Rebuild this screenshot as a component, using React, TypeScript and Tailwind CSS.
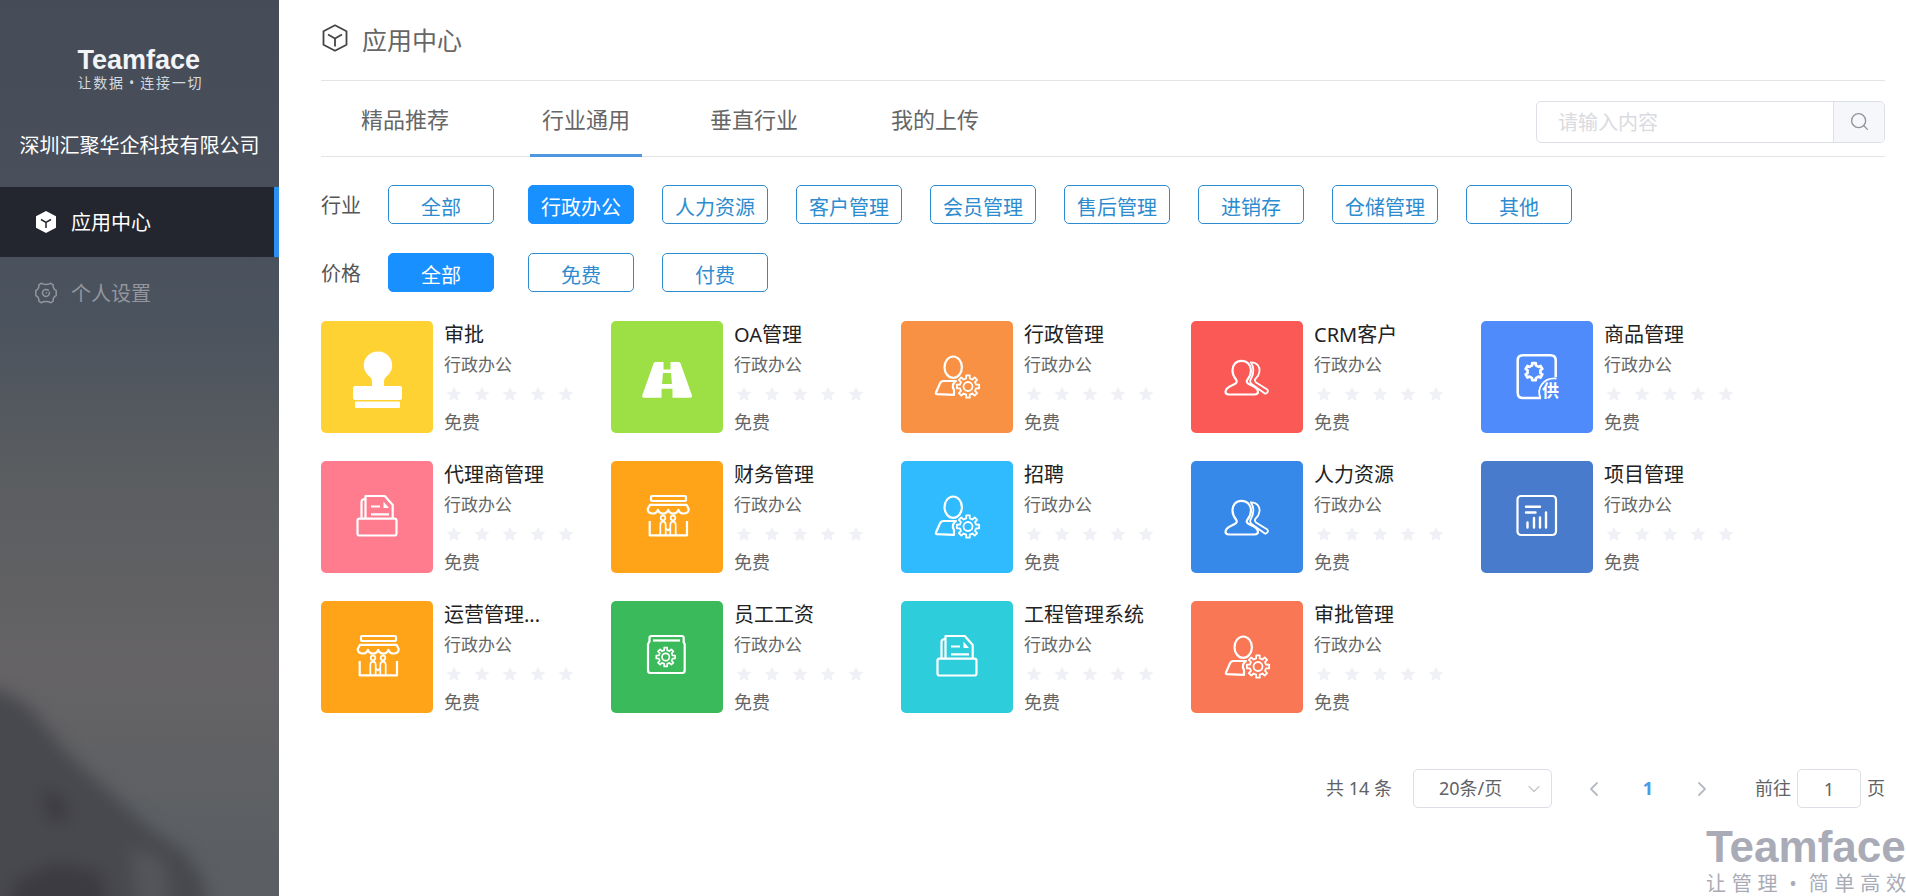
import { useState } from 'react'
import type { ReactNode } from 'react'
import { ChevronDown, ChevronLeft, ChevronRight, Search } from 'lucide-react'
import clsx from 'clsx'

type IconName = 'stamp' | 'road' | 'userGear' | 'users' | 'goods' | 'tray' | 'shop' | 'report' | 'salary'

interface AppItem {
  name: string
  icon: IconName
  color: string
}

const TABS = ['精品推荐', '行业通用', '垂直行业', '我的上传']
const INDUSTRIES = ['全部', '行政办公', '人力资源', '客户管理', '会员管理', '售后管理', '进销存', '仓储管理', '其他']
const PRICES = ['全部', '免费', '付费']

const APPS: AppItem[] = [
  { name: '审批', icon: 'stamp', color: 'bg-[#ffd233]' },
  { name: 'OA管理', icon: 'road', color: 'bg-[#9de045]' },
  { name: '行政管理', icon: 'userGear', color: 'bg-[#f99144]' },
  { name: 'CRM客户', icon: 'users', color: 'bg-[#fa5955]' },
  { name: '商品管理', icon: 'goods', color: 'bg-[#4f8bfa]' },
  { name: '代理商管理', icon: 'tray', color: 'bg-[#ff7c8e]' },
  { name: '财务管理', icon: 'shop', color: 'bg-[#ffa419]' },
  { name: '招聘', icon: 'userGear', color: 'bg-[#30bbff]' },
  { name: '人力资源', icon: 'users', color: 'bg-[#3689e9]' },
  { name: '项目管理', icon: 'report', color: 'bg-[#487bcb]' },
  { name: '运营管理...', icon: 'shop', color: 'bg-[#ffa419]' },
  { name: '员工工资', icon: 'salary', color: 'bg-[#3bba5c]' },
  { name: '工程管理系统', icon: 'tray', color: 'bg-[#2dcddc]' },
  { name: '审批管理', icon: 'userGear', color: 'bg-[#f97754]' },
]

// outline of a cog with flat teeth
function cog(cx: number, cy: number, outer: number, inner: number, teeth: number) {
  const step = (Math.PI * 2) / teeth
  const points: string[] = []
  for (let i = 0; i < teeth; i++) {
    const a = i * step - Math.PI / 2
    const corners = [[-0.28, inner], [-0.2, outer], [0.2, outer], [0.28, inner]]
    corners.forEach(([t, r]) => {
      points.push(`${(cx + r * Math.cos(a + t * step)).toFixed(2)} ${(cy + r * Math.sin(a + t * step)).toFixed(2)}`)
    })
  }
  return `M${points.join('L')}Z`
}

const ICONS: Record<IconName, ReactNode> = {
  stamp: (
    <g fill="currentColor" stroke="none">
      <path d="M57 30.500c8 0 14.200 6 14.200 13.800 0 5.200-3 9-6 11.500-1.700 1.500-2.200 3-2.200 5.200v4.500H51V61c0-2.200-.5-3.700-2.200-5.200-3-2.500-6-6.300-6-11.500 0-7.800 6.200-13.800 14.200-13.800z" />
      <rect x="32" y="65" width="49" height="14" rx="2" />
      <rect x="34" y="80.500" width="45" height="6.500" rx="1" />
    </g>
  ),
  road: (
    <path
      fill="currentColor"
      stroke="none"
      d="M45 41h7.500v7.500h7V41H67c1.500 0 2.300.6 2.800 2l11 31c.6 1.700 0 2.700-1.600 2.700H61.500v-9h-11v9H33c-1.600 0-2.200-1-1.600-2.700l11-31c.4-1.400 1.200-2 2.600-2zM52 52l-1 11h10l-1-11z"
    />
  ),
  userGear: (
    <>
      <ellipse cx="52.200" cy="46.200" rx="8.700" ry="10.700" />
      <path d="M55 60H42.500c-1.800 0-2.800.6-3.500 2.300L35 71.500c-.4 1 0 1.500 1 1.600l17 .8 0-5c-2-3-1-6.500 2-8.900z" />
      <g strokeWidth="1.800">
        <path d={cog(67, 65.5, 11.3, 8.3, 8)} />
        <circle cx="67" cy="65.500" r="4.500" />
      </g>
    </>
  ),
  users: (
    <>
      <path d="M50.500 39.800c-5.500 0-9 4.200-9 9.700 0 4 1.500 6.500 3.500 9 1.300 1.700.8 3.700-1.200 4.600-4.300 2-9.300 3.700-9.300 7.700 0 2 1.200 2.700 3.500 2.700h25.500c2.300 0 3.500-.8 3.500-2.700 0-4-5-5.700-9.300-7.700-2-.9-2.500-2.900-1.200-4.600 2-2.500 3.500-5 3.500-9 0-5.500-4-9.700-9.500-9.700z" />
      <path strokeWidth="1.800" d="M59.800 41.300c6.500 0 9.200 4.500 8.700 9-.4 3.500-2 5.500-3.800 7.200-1.200 1.200-1 2.700.3 3.900l11.300 7.200c1.700 1.600-.8 5-2.800 3.600L61 63.300c-2-1.300-2.300-3.500-1-5.500 3-5.500 4-10.300-.2-16.500z" />
    </>
  ),
  goods: (
    <>
      <path strokeWidth="2.500" d="M60 77H42c-3.200 0-5.300-2-5.300-5.300V39.500c0-3.200 2-5.200 5.300-5.200h27.500c3.200 0 5.200 2 5.200 5.200V56" />
      <path strokeWidth="1.800" d="M59.500 77c-4-9 2-20.500 16-19.500" />
      <path strokeWidth="2.600" d={cog(53, 50.7, 8.8, 6.6, 6)} />
      <text x="61" y="76" fontSize="17" fontWeight="700" fill="currentColor" stroke="none">
        供
      </text>
    </>
  ),
  tray: (
    <>
      <rect x="36.500" y="57.700" width="39" height="16.800" rx="2" />
      <path d="M44.500 57.500V35h19.300l7.900 9v13.500" />
      <path d="M40.500 57.500V41c0-2 1-3 4-3" />
      <path d="M50 45.500h9M50 53.300h18" />
      <path fill="currentColor" stroke="none" d="M62.500 40.500l5.500 6.500h-5.500z" />
    </>
  ),
  shop: (
    <>
      <rect x="40" y="35" width="35" height="5" rx="1" />
      <path d="M39 43.800h36.500l2.200 4.200c0 5.500-8.500 6.200-10.300.8-1.800 5-8.500 5-10.200 0-1.800 5-8.500 5-10.300 0-1.800 5.400-10.200 4.700-10.200-.8z" />
      <path d="M38.700 60v14.300H76V60" />
      <g strokeWidth="1.700">
        <circle cx="52" cy="57" r="2.300" />
        <circle cx="62" cy="57" r="2.300" />
        <path d="M49.300 74V64c0-2.500 1-3.300 2.700-3.300s2.700.8 2.700 3.300v3l2.300 2.500 2.300-2.500v-3c0-2.500 1-3.300 2.700-3.300s2.700.8 2.700 3.300v10M54.700 67v7M59.300 67v7" />
      </g>
    </>
  ),
  report: (
    <>
      <rect x="36.500" y="35" width="38.500" height="39" rx="3.500" />
      <path strokeLinecap="round" strokeWidth="2.400" d="M45 45.700h14M45 51.500h9.500M46.500 66.500v-5M53 66.500v-9.500M59 66.500v-10M65 66.500v-15" />
    </>
  ),
  salary: (
    <>
      <path d="M38.500 41v-4c0-1.200.8-2 2-2h30.200c1.200 0 2 .8 2 2v4" />
      <path d="M42 39.500h27" />
      <path d="M38.500 40.500l-1.500 2.500v26.500c0 1.700 1 2.500 2.500 2.500h31.700c1.500 0 2.500-.8 2.500-2.500V43l-1.500-2.500" />
      <g strokeWidth="1.700">
        <path d={cog(54.7, 56, 9.5, 7, 8)} />
        <circle cx="54.700" cy="56" r="3.700" />
      </g>
    </>
  ),
}

function TaglineText({ text, className }: { text: string; className: string }) {
  return (
    <p className={clsx('flex justify-between', className)}>
      {[...text].map((char, i) => (
        <span key={i} className="w-[1em] text-center">
          {char}
        </span>
      ))}
    </p>
  )
}

function CubeIcon({ className }: { className: string }) {
  return (
    <svg viewBox="0 0 26 28" fill="none" stroke="currentColor" strokeWidth="1.800" strokeLinejoin="round" className={className}>
      <path d="M13 1.300l11.500 6v13.400L13 26.700 1.500 20.700V7.300z" />
      <path d="M6 10.500l7 4 7-4M13 14.500v8" />
    </svg>
  )
}

function Sidebar() {
  return (
    <aside className="relative w-[279px] shrink-0 overflow-hidden bg-[linear-gradient(#454b57,#4b535e_36%,#5a5d60_52%,#656365_75%,#5b5f63_95%)] text-white">
      <svg viewBox="0 0 279 240" className="absolute bottom-0 left-0 w-full overflow-visible blur-[8px]" aria-hidden="true">
        <path fill="#48494e" d="M-40 28L5 36 30 52 70 100 110 136 150 172 185 196 205 226 212 290H-40z" />
        <path fill="#3c3b41" d="M15 225l40-18 45 8 15 65H0zM42 130l25 15 0 22-20-4z" />
        <path fill="#54555a" d="M130 190l35 14 10 80h-35z" />
      </svg>
      <div className="relative flex flex-col">
        <div className="mx-auto mt-[46px] w-[124px]">
          <div className="font-['Liberation_Sans'] text-[27px] leading-[29px] font-bold text-[#f3f4f7]">Teamface</div>
          <TaglineText text="让数据•连接一切" className="text-[14px] leading-4 text-[#d5d8dd]" />
        </div>
        <div className="mt-10 text-center text-[20px] leading-[30px] whitespace-nowrap">深圳汇聚华企科技有限公司</div>
        <nav className="mt-[26px]">
          <a href="#apps" className="flex h-[70px] items-center border-r-[5px] border-[#2a8ff0] bg-[#23262e] pl-9">
            <svg viewBox="0 0 20 22" className="h-[22px] w-5">
              <path fill="white" d="M10 0l10 5.200v11.600L10 22 0 16.800V5.200z" />
              <path fill="none" stroke="#23262e" strokeWidth="1.500" d="M5 8.500l5 2.800 5-2.800M10 11.300V17" />
            </svg>
            <span className="mt-[2px] ml-[15px] text-[20px]">应用中心</span>
          </a>
          <a href="#settings" className="flex h-[72px] items-center pl-[35px] text-[#93969c]">
            <svg viewBox="0 0 22 22" fill="none" stroke="currentColor" strokeWidth="1.500" strokeLinejoin="round" className="size-[22px]">
              <path d="M6.500 1.200c1.500 1.600 7.500 1.600 9 0l2.700 1.600c-.5 2.400 1 5 3 5.700v5c-2 .7-3.500 3.300-3 5.700l-2.700 1.600c-1.500-1.600-7.500-1.600-9 0l-2.700-1.600c.5-2.400-1-5-3-5.700v-5c2-.7 3.500-3.300 3-5.700z" />
              <path d="M13.200 8.200a3.500 3.500 0 1 0 1.200 2M11.300 10.800h.2" strokeLinecap="round" />
            </svg>
            <span className="mt-[2px] ml-[14px] text-[20px]">个人设置</span>
          </a>
        </nav>
      </div>
    </aside>
  )
}

interface FilterRowProps {
  label: string
  options: string[]
  value: string
  onChange: (value: string) => void
}

function FilterRow({ label, options, value, onChange }: FilterRowProps) {
  return (
    <div className="flex items-center">
      <span className="w-[67px] shrink-0 pt-[3px] text-[20px] text-[#555]">{label}</span>
      <div className="flex gap-7">
        {options.map((option) => (
          <button
            key={option}
            type="button"
            onClick={() => onChange(option)}
            className={clsx(
              'h-[39px] w-[106px] rounded-[5px] border pt-[6px] text-[20px] leading-none whitespace-nowrap first:mr-[6px]',
              option === value ? 'border-[#1890ff] bg-[#1890ff] text-white' : 'border-[#2d8ccf] bg-white text-[#2d8ccf]'
            )}
          >
            {option}
          </button>
        ))}
      </div>
    </div>
  )
}

function AppCard({ app }: { app: AppItem }) {
  return (
    <li className="flex gap-[11px]">
      <div className={clsx('size-[112px] shrink-0 rounded-[5px] text-white', app.color)}>
        <svg viewBox="0 0 112 112" fill="none" stroke="currentColor" strokeWidth="2.200" strokeLinejoin="round" className="size-full">
          {ICONS[app.icon]}
        </svg>
      </div>
      <div className="flex flex-col gap-[3px] whitespace-nowrap text-[#666]">
        <h3 className="text-[20px] leading-7 text-[#222]">{app.name}</h3>
        <p className="text-[17px] leading-[26px]">行政办公</p>
        <div className="flex h-[25px] items-center gap-3 pl-[2px]">
          {[1, 2, 3, 4, 5].map((star) => (
            <svg key={star} viewBox="0 0 16 16" className="size-4 fill-[#eff1f6]">
              <path d="M8 .8l2.200 4.800 5.200.6-3.900 3.500 1.100 5.200L8 12.300l-4.600 2.600 1.100-5.200L.6 6.200l5.200-.6z" />
            </svg>
          ))}
        </div>
        <p className="text-[18px] leading-[26px]">免费</p>
      </div>
    </li>
  )
}

function Pagination() {
  return (
    <div className="mt-[54px] flex h-[39px] items-center justify-end text-[18px] text-[#606266]">
      <span>共 14 条</span>
      <div className="relative ml-[21px]">
        <select aria-label="每页条数" className="h-[39px] w-[139px] appearance-none rounded-[5px] border border-[#dcdfe6] bg-white pl-[25px]">
          <option>20条/页</option>
        </select>
        <ChevronDown size={20} strokeWidth={1.3} className="pointer-events-none absolute top-[10px] right-[8px] text-[#c0c4cc]" />
      </div>
      <div className="ml-[29px] flex items-center gap-[28px]">
        <button type="button" aria-label="上一页" className="flex w-[26px] justify-center text-[#b6bac2]">
          <ChevronLeft size={24} strokeWidth={1.8} />
        </button>
        <button type="button" className="w-[26px] font-bold text-[#4a9be6]">
          1
        </button>
        <button type="button" aria-label="下一页" className="flex w-[26px] justify-center text-[#b6bac2]">
          <ChevronRight size={24} strokeWidth={1.8} />
        </button>
      </div>
      <label className="ml-10 flex items-center gap-[6px]">
        前往
        <input defaultValue="1" className="h-[39px] w-16 rounded-[5px] border border-[#dcdfe6] text-center" />
        页
      </label>
    </div>
  )
}

export default function App() {
  const [tab, setTab] = useState('行业通用')
  const [industry, setIndustry] = useState('行政办公')
  const [price, setPrice] = useState('全部')

  return (
    <div className="flex min-h-screen bg-white font-['Noto_Sans','Noto_Sans_CJK_SC',sans-serif]">
      <Sidebar />
      <main className="flex min-w-0 flex-1 flex-col">
        <div className="pr-[21px] pl-[42px]">
          <header className="flex h-[81px] items-center border-b border-[#e4e4e4] text-[#666]">
            <CubeIcon className="mb-1 h-7 w-[28px] text-[#444]" />
            <h1 className="ml-[13px] pt-[2px] text-[25px]">应用中心</h1>
          </header>

          <div className="flex h-[76px] items-center justify-between border-b border-[#e4e4e4]">
            <div role="tablist" className="flex h-[76px] pl-7">
              {TABS.map((name) => (
                <button
                  key={name}
                  type="button"
                  role="tab"
                  aria-selected={tab === name}
                  onClick={() => setTab(name)}
                  className={clsx(
                    'w-28 border-b-[3px] pt-1 text-[22px] text-[#666] odd:mr-[69px] even:mr-14',
                    tab === name ? 'border-[#4f97e0]' : 'border-transparent'
                  )}
                >
                  {name}
                </button>
              ))}
            </div>
            <div className="mt-[6px] flex h-[42px] w-[349px] overflow-hidden rounded-[5px] border border-[#dcdfe6]">
              <input
                type="text"
                aria-label="搜索应用"
                placeholder="请输入内容"
                className="min-w-0 flex-1 pt-[2px] pl-[21px] text-[20px] placeholder:text-[#d9dbe0] focus:outline-none"
              />
              <button type="button" aria-label="搜索" className="flex w-[51px] items-center justify-center border-l border-[#dcdfe6] bg-[#f5f7fa] text-[#909399]">
                <Search size={21} strokeWidth={1.5} />
              </button>
            </div>
          </div>

          <div className="mt-7 space-y-[29px]">
            <FilterRow label="行业" options={INDUSTRIES} value={industry} onChange={setIndustry} />
            <FilterRow label="价格" options={PRICES} value={price} onChange={setPrice} />
          </div>

          <ul className="mt-[29px] grid grid-cols-[repeat(auto-fill,290px)] gap-y-[26px]">
            {APPS.map((app) => (
              <AppCard key={app.name} app={app} />
            ))}
          </ul>

          <Pagination />
        </div>

        <div className="mt-auto w-[200px] self-end text-[#a9abb6]">
          <div className="font-['Liberation_Sans'] text-[44px] leading-[50px] font-bold">Teamface</div>
          <TaglineText text="让管理•简单高效" className="text-[20px] leading-6" />
        </div>
      </main>
    </div>
  )
}
